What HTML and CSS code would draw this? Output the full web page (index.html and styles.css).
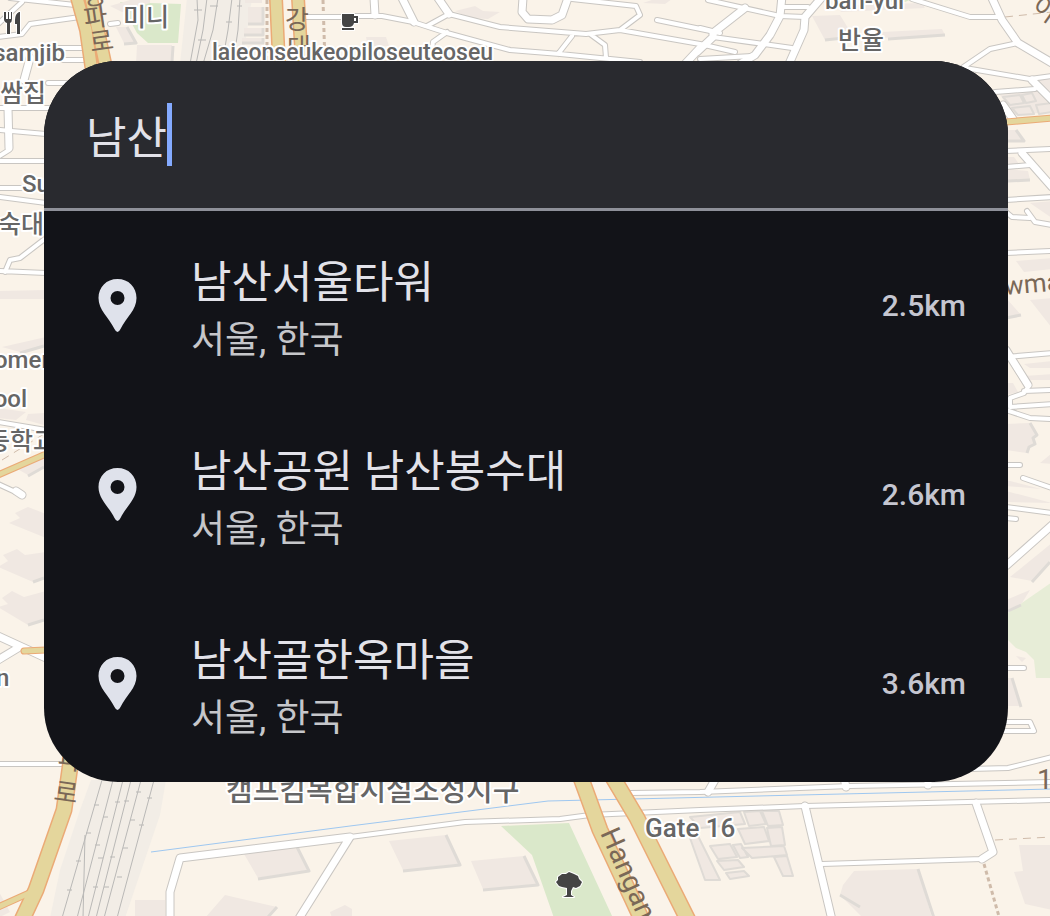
FILE: index.html
```html
<!DOCTYPE html>
<html lang="ko">
<head>
  <meta charset="UTF-8">
  <meta name="viewport" content="width=device-width, initial-scale=1.0">
  <title>남산 - 장소 검색</title>
  <link rel="stylesheet" href="styles.css">
</head>
<body>
  <svg class="map" viewBox="0 0 1050 916" preserveAspectRatio="xMidYMid slice" aria-hidden="true">
    <defs>
      <g id="small-roads">
        <path d="M10-2 75 5M-2 24 22 2M80 17 30 24 22 34-2 37M58 48H86M60 60H88M-2 157 9 150 8 108M0 108H50M0 130 46 134M0 161H46M0 188H22M0 197 46 203M110 24 118 23M48 83H66M305 17H345"/>
        <path d="M350 16H382L413 22 447 33 510 50 560 54 640 62M449 14 500 27 586 34 620 30 640 15 636 6 572-1M620 30 700 44 735 52M657 20 720 33M427 26 449 14M447 32 433 42 432 50M572 36 558 54M590 34 605 45 606 58"/>
        <path d="M708 0 780 16 805 17M782 7H808M700 28 712 31M713 37 792 48M700 59 752 56M912-1 970 17H1000M965 68 1030 79 1052 76M1018 43 990 49 962 68M995 92 1035 89M1006 151 1052 149M1006 167 1030 165M1006 200 1052 197M1006 212 1012 217 1030 218M1027 211 1035 222 1052 225"/>
        <path d="M-2 271 46 273M5 272 10 260 20 258 46 238M-2 422 46 430M-2 484 22 495M1006 253 1052 251M1006 357 1052 353M1024 391 1052 390M1006 352 1028 387 1024 393 1010 398 1010 407 1052 404M1006 410 1030 418 1052 419M1006 465H1020M1023 478 1052 488M1006 507 1052 513M1006 668H1024M1004 722H1030L1034 731H1004M-2 764H66"/>
        <path d="M350 837 465 822 560 819 590 815 700 810 805 806 1052 800M630 793 700 792 850 786 1052 782M822 864 982 859 993 852M970 769 1008 768 1052 757M1006 518 1016 519"/>
      </g>
      <g id="big-roads">
        <path d="M30 58 24 80M8 108 9 148M374-2 375 15M402-2 414 22M438-2 449 14M523-2 522 12 528 19 552 20 562 15 568-2M745 8 713 33V37L697 52M782-4 780 16 770 35 755 55 740 64M823-4 805 17 804 30 789 64M700 48 685 64M991-4 1002 20 1018 43 1052 63M1032 80 1052 100M1003 105 1013 119M1022 153 1052 187M1006 350 1028 385M1006 566 1052 525"/>
        <path d="M-2 636 46 658M-2 660 18 648M16 491 22 495M170 920V892L180 858 350 837 298 920M716 778 708 792M844 778 846 787M928 778V785M805 806 832 920M976 803 993 852 982 859"/>
      </g>
      <g id="main-roads">
        <path d="M77-2 86 30 92 72M91-2 98 30 107 72M276-2 279 64M298-2 302 64"/>
      </g>
      <g id="wide-roads">
        <path d="M71 760 64 810 36 890 22 920M581 778 600 830 642 920M612 776 637 818 688 920"/>
      </g>
      <g id="thin-main-roads">
        <path d="M1006 122 1052 118M-2 475 46 454M24 651 46 650M36 890-4 908"/>
      </g>
    </defs>

    <rect class="land" width="1050" height="916"/>

    <!-- parks -->
    <path class="park" d="M120 2 150 3 181 4 178 43H148L137 33ZM820-1H912L905 2ZM501 826 569 823 613 918H554L532 855Z"/>
    <path class="park-light" d="M1006 614 1052 582V678H1036L1034 660 1026 652 1016 648 1006 638Z"/>

    <!-- rail yard -->
    <path class="yard" d="M187-2H252L242 64H180ZM91 780H166L160 815 125 918H50L60 870 80 810Z"/>
    <path class="rail" d="M197-2 198 20 190 64M207-2 203 30 196 64M218-2 213 30 203 64M232-2 228 30 222 64M240-2 238 30 233 64M102 780 62 918M113 780 77 918M123 780 88 918M131 780 96 918M141 780 104 918M154 780 117 918M85 835 83 918"/>
    <path class="rail" d="M94 805H99M103 817H108M86 833H91M95 845H100M76 861H81M67 890H72M115 802H120M124 801H129M98 858H103M110 857H115M93 887H98M130 820H135M147 798H152M136 792H141M117 877H122M123 848H128M139 825H144M104 887H109M194 10H202M210 6H218M198 40H206M226 22H232M218 46H226M237 6H242"/>

    <!-- buildings -->
    <g class="building">
      <path d="M116 27H127L136 43H124ZM137 45H172L171 64H136ZM110 6 130 0H150V3L122 12ZM245-2H262V3H245ZM248 7H263V23H248ZM244 28H263V34H244ZM242 38H263V42H242Z"/>
      <path d="M455 11 475 6 483 11 500 12 488 19 470 18ZM643 3 655-1H672L665 4ZM366 37H386L389 46H368ZM812 16 840 15 853 36 825 40ZM882 32 942 29 945 35 880 38ZM850 5 922 3 925 8 840 12Z"/>
      <path d="M1000 95 1050 90V112L1015 115ZM1035 80 1052 78V98ZM1006 130H1016L1023 140H1006ZM1006 157H1014L1019 164H1006ZM1006 169 1028 171 1030 180 1006 181ZM1030 203 1052 201V218Z"/>
      <path d="M-2 291 46 290V299H-2ZM2 347 46 337V345L20 352ZM-2 408 26 412 16 420-2 418ZM28 414 44 413V425L26 420ZM14 467 46 457V466L28 475ZM9 523 20 518 15 513 28 507 46 514V538ZM-2 567 8 561 3 555 17 549 25 555 46 552V577L33 582ZM-2 607 8 604 2 598 12 591 24 597 46 591V619L28 625Z"/>
      <path d="M1016 261 1052 258V269L1024 272ZM1006 298 1021 315 1006 317ZM1030 300 1052 298V328ZM1024 364 1052 361V368H1030ZM1024 376 1052 374V380H1026ZM1006 383H1013L1018 392 1006 395ZM1006 424 1030 423 1037 435 1033 438 1035 444 1029 447 1027 453 1006 450ZM1040 463 1052 453V464ZM1006 480 1041 489 1006 486ZM1006 491 1052 503 1006 502ZM1010 577 1052 543V558L1032 581ZM1006 600 1030 590 1022 603 1006 611ZM1016 656 1026 658 1022 662ZM1006 678H1012L1020 706H1006Z"/>
      <path d="M244 854 297 847 308 870 258 878ZM225 895 277 907 265 918H205ZM135 900H165V918H135ZM330 912 345 905 352 909V918H332ZM389 841 446 835 458 864 403 870ZM471 861 524 856 536 884 483 889ZM-2 890 10 912-2 918Z"/>
      <path d="M854 871 918 869 932 918H863L840 895 843 885ZM1019 845H1052V910L1025 904 1014 872 1023 871Z"/>
    </g>
    <path class="block" d="M690 817 740 812 745 824 700 828ZM744 812 760 811 766 824 749 826ZM762 811 779 811 783 825 768 826ZM738 829 764 827 769 841 745 844ZM767 828 782 827 785 845 771 846ZM710 846 730 844 737 857 718 859ZM733 845 741 844 748 857 740 858ZM717 861 738 860 744 867 724 870ZM742 848 784 846 787 855 752 858ZM774 857 787 856 793 876 783 876ZM690 838 698 836 720 880 705 880ZM726 873 744 871 749 876 730 879ZM1003 97 1020 95 1024 103 1010 105ZM1022 95 1032 93 1036 101 1026 103ZM1012 108 1030 106 1034 114 1018 115ZM1036 105 1052 103V112L1039 114Z"/>
    <path class="shade" d="M297 847 309 871 258 879M446 835 460 865 403 871M524 856 538 885 483 890M918 869 934 918M853 37 825 40M945 35 888 39M1021 315 1006 318M1030 423 1037 435 1033 438 1035 444 1029 447 1027 453M1012 678 1021 707M1032 582 1050 562M1021 605 1008 611M277 907 268 917M1016 130 1024 141H1008M1030 180 1008 181M20 353 44 346M28 476 44 467M33 582 44 578M28 625 44 620M840 895 860 907M127 27 136 43 124 44M173 46 172 62M263 7V24H248M263 28V35H244M263 38V43H242"/>

    <!-- stream -->
    <path class="stream" d="M151 852 350 826 548 801 1052 789"/>

    <!-- foot paths -->
    <path class="path" d="M267 0V64M323 0 325 64M984 864 1000 920"/>
    <path class="path thin" d="M995 840 1052 837M1005 17 1052 12M2 460 44 434"/>

    <use href="#small-roads" class="casing small"/>
    <use href="#big-roads" class="casing big"/>
    <use href="#small-roads" class="fill small"/>
    <use href="#big-roads" class="fill big"/>
    <use href="#thin-main-roads" class="main-casing thin"/>
    <use href="#main-roads" class="main-casing mid"/>
    <use href="#wide-roads" class="main-casing wide"/>
    <use href="#thin-main-roads" class="main-fill thin"/>
    <use href="#main-roads" class="main-fill mid"/>
    <use href="#wide-roads" class="main-fill wide"/>

    <!-- street names -->
    <g class="street">
      <text transform="translate(83 6) rotate(-8)">청</text>
      <text transform="translate(85 28) rotate(-8)">파</text>
      <text transform="translate(91 52) rotate(-8)">로</text>
      <text x="285" y="29">강</text>
      <text x="287" y="57">대</text>
      <text transform="translate(57 767) rotate(8)">파</text>
      <text transform="translate(53 800) rotate(8)">로</text>
      <text class="large" transform="translate(600 833) rotate(66)">Hangang-daero</text>
      <text transform="translate(1005 295) rotate(-5)">wman-ro</text>
      <text class="large" x="1037" y="789">1</text>
      <text transform="translate(1030 10) rotate(35)">이</text>
    </g>

    <!-- place names -->
    <g class="place">
      <text x="65" y="61" text-anchor="end">samjib</text>
      <text class="ko" x="0" y="102">쌈집</text>
      <text class="ko" x="123" y="26">미니</text>
      <text class="long" x="212" y="60">laieonseukeopiloseuteoseu</text>
      <text x="825" y="9">ban-yul</text>
      <text class="ko" x="838" y="49">반율</text>
      <text x="22" y="192">Sun</text>
      <text class="ko" x="-2" y="233">숙대</text>
      <text x="-6" y="368">omen</text>
      <text x="27" y="407" text-anchor="end">ool</text>
      <text class="ko" x="-13" y="450">등학교</text>
      <text x="-4" y="686">n</text>
      <text class="large" x="226" y="801">캠프킴복합시설조성지구</text>
      <text class="gate" x="645" y="837">Gate 16</text>
    </g>

    <!-- restaurant, cafe, park -->
    <path class="poi" d="M4 12V19Q4 22 7 23V34H10V23Q12 22 12 19V12H11V19H9V12H8V19H6V12ZM19 12Q15 14 15 20V24H17V34H20V12Z"/>
    <path class="poi" fill-rule="evenodd" d="M342 14H354V16H358V23H354Q353 27 349 27H346Q342 27 342 23ZM354 18V21H356V18ZM342 28H354V30H342Z"/>
    <path class="poi" d="M569 872 574 874 578 876 579 879 582 882 580 886 576 888 573 887 571 891V895L574 897H563L567 895V888L562 887 559 886 556 882 558 880V877L562 874 566 874Z"/>
  </svg>

  <main class="search">
    <form class="search-bar">
      <input class="search-input" type="text" name="place" value="남산" aria-label="장소 검색" autocomplete="off">
      <span class="caret"></span>
    </form>
    <ul class="results">
      <li>
        <a class="result" href="#tower">
          <svg class="pin" viewBox="0 0 38 54"><path fill-rule="evenodd" d="M19 0C8 0 0 8 0 19C0 31 10 38 16 50Q19 56 22 50C28 38 38 31 38 19C38 8 30 0 19 0ZM19 12a7 7 0 1 1 0 14a7 7 0 1 1 0-14Z"/></svg>
          <span class="info">
            <span class="name">남산서울타워</span>
            <span class="area">서울, 한국</span>
          </span>
          <span class="distance">2.5km</span>
        </a>
      </li>
      <li>
        <a class="result" href="#beacon">
          <svg class="pin" viewBox="0 0 38 54"><path fill-rule="evenodd" d="M19 0C8 0 0 8 0 19C0 31 10 38 16 50Q19 56 22 50C28 38 38 31 38 19C38 8 30 0 19 0ZM19 12a7 7 0 1 1 0 14a7 7 0 1 1 0-14Z"/></svg>
          <span class="info">
            <span class="name">남산공원 남산봉수대</span>
            <span class="area">서울, 한국</span>
          </span>
          <span class="distance">2.6km</span>
        </a>
      </li>
      <li>
        <a class="result" href="#village">
          <svg class="pin" viewBox="0 0 38 54"><path fill-rule="evenodd" d="M19 0C8 0 0 8 0 19C0 31 10 38 16 50Q19 56 22 50C28 38 38 31 38 19C38 8 30 0 19 0ZM19 12a7 7 0 1 1 0 14a7 7 0 1 1 0-14Z"/></svg>
          <span class="info">
            <span class="name">남산골한옥마을</span>
            <span class="area">서울, 한국</span>
          </span>
          <span class="distance">3.6km</span>
        </a>
      </li>
    </ul>
  </main>
</body>
</html>
```
FILE: styles.css
```css
*{
  margin: 0;
  padding: 0;
  box-sizing: border-box;
}
body{
  position: relative;
  min-height: 100vh;
  padding: 61px 42px 61px 44px;
  overflow: hidden;
  background: #faf3e9;
  font-family: Roboto, "Noto Sans CJK KR", sans-serif;
}

/* map */
.map{
  position: absolute;
  top: 0;
  left: 0;
  width: 100%;
  height: 100%;
}
.map path{
  stroke-linejoin: round;
}
.land{
  fill: #faf3e9;
}
.park{
  fill: #dae8ca;
}
.park-light{
  fill: #e7edd7;
}
.yard{
  fill: #f2ede6;
}
.rail{
  fill: none;
  stroke: #b9b8b6;
  stroke-width: 1px;
}
.building{
  fill: #f0e8e2;
}
.block{
  fill: #f0e8e2;
  stroke: #dfdbd6;
  stroke-width: 2px;
}
.shade{
  fill: none;
  stroke: #dfdbd6;
  stroke-width: 3px;
}
.stream{
  fill: none;
  stroke: #9ec7f0;
  stroke-width: 1px;
}
.path{
  fill: none;
  stroke: #cfbbaa;
  stroke-width: 3px;
  stroke-dasharray: 4 3;
}
.path.thin{
  stroke-width: 1px;
  stroke-dasharray: 8 6;
}
.casing,
.fill,
.main-casing,
.main-fill{
  fill: none;
  stroke-linecap: round;
}
.casing{
  stroke: #c9c6c2;
}
.fill{
  stroke: #fff;
}
.casing.small{
  stroke-width: 6px;
}
.fill.small{
  stroke-width: 4px;
}
.casing.big{
  stroke-width: 9px;
}
.fill.big{
  stroke-width: 7px;
}
.main-casing{
  stroke: #ebaa76;
}
.main-fill{
  stroke: #e4d69c;
}
.main-casing.thin{
  stroke-width: 7px;
}
.main-fill.thin{
  stroke-width: 5px;
}
.main-casing.mid{
  stroke-width: 14px;
}
.main-fill.mid{
  stroke-width: 11px;
}
.main-casing.wide{
  stroke-width: 17px;
}
.main-fill.wide{
  stroke-width: 14px;
}
.street{
  fill: #7a6857;
  font-size: 26px;
}
.street .large{
  font-size: 28px;
}
.place{
  fill: #666;
  stroke: #fff;
  stroke-width: 4px;
  stroke-linejoin: round;
  paint-order: stroke;
  font-size: 24px;
  font-weight: 500;
}
.place .ko{
  font-size: 25px;
}
.place .long{
  font-size: 23px;
}
.place .large{
  font-size: 29px;
}
.place .gate{
  font-size: 26px;
}
.poi{
  fill: #444;
  stroke: #fff;
  stroke-width: 2px;
  paint-order: stroke;
}

/* search panel */
.search{
  position: relative;
  padding-bottom: 4px;
  border-radius: 74px;
  overflow: hidden;
  background: #121318;
  color: #e2e2e9;
}
.search-bar{
  display: flex;
  align-items: center;
  height: 150px;
  padding: 0 42px;
  border-bottom: 3px solid #8e9099;
  background: #292a2f;
}
.search-input{
  field-sizing: content;
  height: 63px;
  border: none;
  outline: none;
  background: none;
  color: inherit;
  font-family: inherit;
  font-size: 44px;
  caret-color: transparent;
}
.caret{
  width: 5px;
  height: 63px;
  background: #84aaff;
}
.results{
  list-style: none;
}
.result{
  display: flex;
  align-items: center;
  gap: 42px;
  height: 189px;
  padding: 0 42px;
  color: inherit;
  text-decoration: none;
}
.pin{
  width: 63px;
  height: 54px;
  fill: #dfe2eb;
}
.info{
  flex: 1;
  display: flex;
  flex-direction: column;
  padding-top: 8px;
}
.name{
  font-size: 44px;
  line-height: 63px;
}
.area{
  color: #c5c6ca;
  font-size: 37px;
  line-height: 52px;
}
.distance{
  color: #c5c6d0;
  font-size: 30px;
  font-weight: 500;
}
```
